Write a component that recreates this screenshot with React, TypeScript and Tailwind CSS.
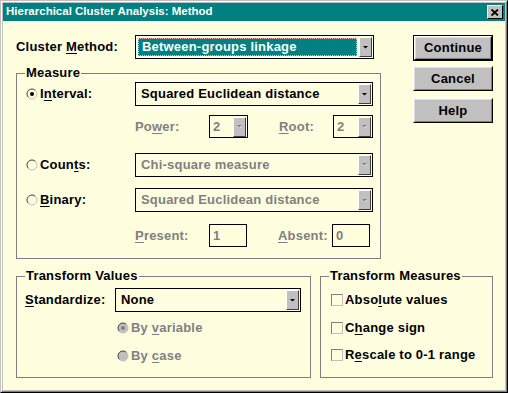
import React from "react";

const U = ({ c }: { c: string }) => <span className="underline underline-offset-[2px]">{c}</span>;

const Arrow = ({ disabled }: { disabled?: boolean }) => (
  <div className="mr-[1px] flex h-[20px] w-[13px] shrink-0 items-center justify-center border border-t-white border-l-white border-r-[#404040] border-b-[#404040] bg-[#c0c0c0]">
    <svg width="7" height="5" viewBox="0 0 7 5">
      {disabled && <path d="M2 2 L6 2 L4 4 Z" fill="#ffffff" />}
      <path d="M1 1 L6 1 L3.5 3.5 Z" fill={disabled ? "#808080" : "#000000"} />
    </svg>
  </div>
);

const Combo = ({ text, w, disabled, selected }: any) => (
  <div className={`flex h-[24px] shrink-0 items-center border border-black bg-[#ffffe0] ${w}`}>
    {selected ? (
      <div className="ml-[2px] mr-[2px] flex h-[18px] flex-1 items-center border border-dotted border-[#ffb0b0] bg-[#008080] pl-[3px] text-white">
        {text}
      </div>
    ) : (
      <div className={`flex-1 pl-[5px] ${disabled ? "text-[#808080]" : "text-black"}`}>{text}</div>
    )}
    <Arrow disabled={disabled} />
  </div>
);

const Spin = ({ text, w }: any) => (
  <div className={`flex h-[23px] shrink-0 items-center border border-black ${w}`}>
    <div className="flex-1 pl-[3px] text-[#808080]">{text}</div>
    <Arrow disabled />
  </div>
);

const Field = ({ text, w }: any) => (
  <div className={`flex h-[23px] shrink-0 items-center border border-black pl-[3px] text-[#808080] ${w}`}>{text}</div>
);

const Radio = ({ checked, disabled }: any) => (
  <svg width="12" height="12" viewBox="0 0 12 12" className="shrink-0">
    <circle cx="6" cy="6" r="5" fill={disabled ? "#c0c0c0" : "#ffffe0"} />
    <path d="M2.46 9.54 A5 5 0 0 1 9.54 2.46" stroke="#404040" fill="none" />
    <path d="M9.54 2.46 A5 5 0 0 1 2.46 9.54" stroke="#c0c0c0" fill="none" />
    {checked && <circle cx="6" cy="6" r="2" fill={disabled ? "#808080" : "#000000"} />}
  </svg>
);

const Check = () => (
  <div className="h-[12px] w-[12px] shrink-0 border border-t-[#808080] border-l-[#808080] border-r-[#c0c0c0] border-b-[#c0c0c0] bg-[#ffffe0]" />
);

const Btn = ({ label, main }: any) => (
  <div className={`w-[80px] ${main ? "h-[26px] border border-black" : "h-[25px]"}`}>
    <div className="h-full border border-t-white border-l-white border-r-black border-b-black">
      <div className="flex h-full items-center justify-center border border-t-[#dfdfdf] border-l-[#dfdfdf] border-r-[#808080] border-b-[#808080] bg-[#c0c0c0] text-black">
        {label}
      </div>
    </div>
  </div>
);

const Group = ({ title, className, children }: any) => (
  <div className={`relative border border-[#808080] ${className}`}>
    <div className="absolute -top-[9px] left-[8px] bg-[#ffffe0] px-[1px] leading-[16px] text-black">{title}</div>
    {children}
  </div>
);

export default function App() {
  return (
    <div
      className="h-[393px] w-[508px] select-none border border-t-[#c0c0c0] border-l-[#c0c0c0] border-r-black border-b-black text-[13px] font-bold tracking-[0.2px]"
      style={{ fontFamily: '"Liberation Sans", Arial, sans-serif' }}
    >
      <div className="h-full border border-t-white border-l-white border-r-[#808080] border-b-[#808080]">
        <div className="flex h-full flex-col border border-[#c0c0c0] bg-[#ffffe0]">
          {/* title bar */}
          <div className="flex h-[18px] shrink-0 items-center justify-between bg-[#008080] pl-[3px] pr-[2px]">
            <span className="text-[11.5px] tracking-normal text-white">Hierarchical Cluster Analysis: Method</span>
            <div className="flex h-[14px] w-[16px] items-center justify-center border border-t-white border-l-white border-r-black border-b-black bg-[#c0c0c0]">
              <svg width="8" height="7" viewBox="0 0 8 7">
                <path d="M0.5 0.5 L7 6.5 M7 0.5 L0.5 6.5" stroke="#000" strokeWidth="1.8" />
              </svg>
            </div>
          </div>

          <div className="pl-[13px] pt-[14px] text-black">
            <div className="flex items-start">
              <div className="w-[365px]">
                <div className="flex h-[24px] items-center">
                  <div className="w-[119px]">Cluster <U c="M" />ethod:</div>
                  <Combo text="Between-groups linkage" w="w-[239px]" selected />
                </div>

                <Group title="Measure" className="mt-[14px] w-[365px] pb-[11px] pt-[8px]">
                  <div className="flex h-[24px] items-center">
                    <div className="flex w-[118px] items-center gap-[2px] pl-[9px]">
                      <Radio checked />
                      <span>I<U c="n" />terval:</span>
                    </div>
                    <Combo text="Squared Euclidean distance" w="w-[238px]" />
                  </div>

                  <div className="mt-[9px] flex h-[23px] items-center">
                    <div className="w-[118px]" />
                    <div className="w-[74px] text-[#808080]">Po<U c="w" />er:</div>
                    <Spin text="2" w="w-[39px]" />
                    <div className="ml-[31px] w-[54px] text-[#808080]"><U c="R" />oot:</div>
                    <Spin text="2" w="w-[40px]" />
                  </div>

                  <div className="mt-[15px] flex h-[23px] items-center">
                    <div className="flex w-[118px] items-center gap-[2px] pl-[9px]">
                      <Radio />
                      <span>Coun<U c="t" />s:</span>
                    </div>
                    <Combo text="Chi-square measure" w="w-[238px]" disabled />
                  </div>

                  <div className="mt-[12px] flex h-[24px] items-center">
                    <div className="flex w-[118px] items-center gap-[2px] pl-[9px]">
                      <Radio />
                      <span><U c="B" />inary:</span>
                    </div>
                    <Combo text="Squared Euclidean distance" w="w-[238px]" disabled />
                  </div>

                  <div className="mt-[12px] flex h-[23px] items-center">
                    <div className="w-[118px]" />
                    <div className="w-[74px] text-[#808080]"><U c="P" />resent:</div>
                    <Field text="1" w="w-[38px]" />
                    <div className="ml-[31px] w-[54px] text-[#808080]"><U c="A" />bsent:</div>
                    <Field text="0" w="w-[38px]" />
                  </div>
                </Group>
              </div>

              <div className="ml-[32px] flex flex-col">
                <Btn label="Continue" main />
                <div className="mt-[5px]"><Btn label="Cancel" /></div>
                <div className="mt-[7px]"><Btn label="Help" /></div>
              </div>
            </div>

            <div className="mt-[17px] flex">
              <Group title="Transform Values" className="h-[102px] w-[295px] pt-[11px]">
                <div className="flex h-[24px] items-center">
                  <div className="w-[98px] pl-[8px]"><U c="S" />tandardize:</div>
                  <Combo text="None" w="w-[186px]" />
                </div>
                <div className="ml-[100px] mt-[8px] flex h-[16px] items-center gap-[2px] text-[#808080]">
                  <Radio checked disabled />
                  <span>By <U c="v" />ariable</span>
                </div>
                <div className="ml-[100px] mt-[12px] flex h-[16px] items-center gap-[2px] text-[#808080]">
                  <Radio disabled />
                  <span>By <U c="c" />ase</span>
                </div>
              </Group>

              <Group title="Transform Measures" className="ml-[9px] h-[102px] w-[173px] pl-[10px] pt-[15px]">
                <div className="flex h-[16px] items-center gap-[2px]">
                  <Check />
                  <span>Abso<U c="l" />ute values</span>
                </div>
                <div className="mt-[12px] flex h-[16px] items-center gap-[2px]">
                  <Check />
                  <span>C<U c="h" />ange sign</span>
                </div>
                <div className="mt-[11px] flex h-[16px] items-center gap-[2px]">
                  <Check />
                  <span>R<U c="e" />scale to 0-1 range</span>
                </div>
              </Group>
            </div>
          </div>
        </div>
      </div>
    </div>
  );
}
